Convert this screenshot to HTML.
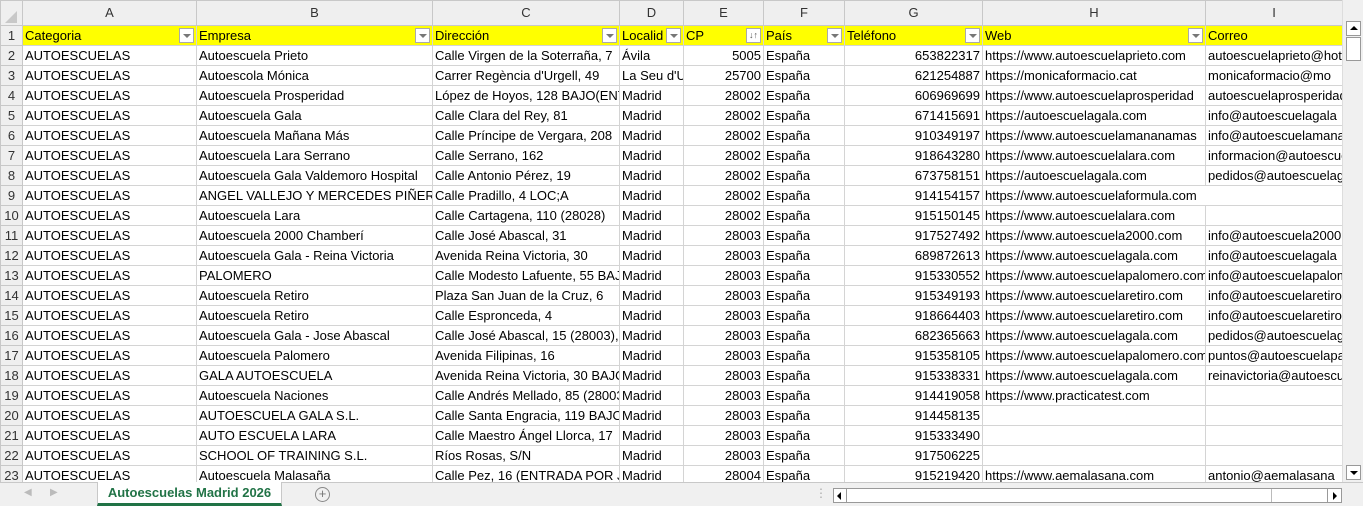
<!DOCTYPE html><html><head><meta charset="utf-8"><style>
*{margin:0;padding:0;box-sizing:border-box}
body{width:1363px;height:506px;overflow:hidden;background:#fff;font-family:"Liberation Sans",Arial,sans-serif;font-size:13px;color:#000;position:relative}
table{border-collapse:collapse;table-layout:fixed;position:absolute;left:0;top:0;width:1342px}
td{height:20px;border:1px solid #d4d4d4;white-space:nowrap;overflow:hidden;padding:0 2px;line-height:18px;position:relative}
tr.ch td{height:25px;background:#efefef;color:#333;text-align:center;border-color:#c8c8c8;font-size:13px}
td.rh{background:#efefef;color:#333;text-align:center;padding:0;border-color:#c8c8c8}
tr.h td{background:#ffff00}
tr.h td.rh{background:#efefef}
.r{text-align:right}
.f{position:absolute;right:2px;top:2px;width:15px;height:15px;background:#fff;border:1px solid #aaa}
.f:after{content:"";position:absolute;left:3px;top:5px;border-left:4px solid transparent;border-right:4px solid transparent;border-top:4px solid #777}
.s{position:absolute;right:2px;top:2px;width:15px;height:15px;background:#fff;border:1px solid #aaa;font-size:9px;line-height:13px;text-align:center;color:#555}
.tri{position:absolute;left:4px;top:10px;border-left:12px solid transparent;border-bottom:12px solid #c8c8c8}
#vs{position:absolute;left:1342px;top:0;width:21px;height:482px;background:#f0f0f0;border-left:1px solid #ddd}
#bot{position:absolute;left:0;top:482px;width:1363px;height:24px;background:#f0f0f0;border-top:1px solid #c8c8c8}
</style></head><body>
<table>
<colgroup><col style="width:22px"><col style="width:174px"><col style="width:236px"><col style="width:187px"><col style="width:64px"><col style="width:80px"><col style="width:81px"><col style="width:138px"><col style="width:223px"><col style="width:137px"></colgroup>
<tr class="ch"><td class="rh"><div class="tri"></div></td><td>A</td><td>B</td><td>C</td><td>D</td><td>E</td><td>F</td><td>G</td><td>H</td><td>I</td></tr>
<tr class="h"><td class="rh">1</td><td>Categoria<span class="f"></span></td><td>Empresa<span class="f"></span></td><td>Dirección<span class="f"></span></td><td>Localid<span class="f"></span></td><td>CP<span class="s">↓↑</span></td><td>País<span class="f"></span></td><td>Teléfono<span class="f"></span></td><td>Web<span class="f"></span></td><td>Correo</td></tr>
<tr><td class="rh">2</td><td>AUTOESCUELAS</td><td>Autoescuela Prieto</td><td>Calle Virgen de la Soterraña, 7</td><td>Ávila</td><td class="r">5005</td><td>España</td><td class="r">653822317</td><td>https://www.autoescuelaprieto.com</td><td>autoescuelaprieto@hotmail.com</td></tr>
<tr><td class="rh">3</td><td>AUTOESCUELAS</td><td>Autoescola Mónica</td><td>Carrer Regència d'Urgell, 49</td><td>La Seu d'Urgell</td><td class="r">25700</td><td>España</td><td class="r">621254887</td><td>https://monicaformacio.cat</td><td>monicaformacio@mo</td></tr>
<tr><td class="rh">4</td><td>AUTOESCUELAS</td><td>Autoescuela Prosperidad</td><td>López de Hoyos, 128 BAJO(ENT</td><td>Madrid</td><td class="r">28002</td><td>España</td><td class="r">606969699</td><td>https://www.autoescuelaprosperidad</td><td>autoescuelaprosperidad</td></tr>
<tr><td class="rh">5</td><td>AUTOESCUELAS</td><td>Autoescuela Gala</td><td>Calle Clara del Rey, 81</td><td>Madrid</td><td class="r">28002</td><td>España</td><td class="r">671415691</td><td>https://autoescuelagala.com</td><td>info@autoescuelagala</td></tr>
<tr><td class="rh">6</td><td>AUTOESCUELAS</td><td>Autoescuela Mañana Más</td><td>Calle Príncipe de Vergara, 208</td><td>Madrid</td><td class="r">28002</td><td>España</td><td class="r">910349197</td><td>https://www.autoescuelamananamas</td><td>info@autoescuelamana</td></tr>
<tr><td class="rh">7</td><td>AUTOESCUELAS</td><td>Autoescuela Lara Serrano</td><td>Calle Serrano, 162</td><td>Madrid</td><td class="r">28002</td><td>España</td><td class="r">918643280</td><td>https://www.autoescuelalara.com</td><td>informacion@autoescuela</td></tr>
<tr><td class="rh">8</td><td>AUTOESCUELAS</td><td>Autoescuela Gala Valdemoro Hospital</td><td>Calle Antonio Pérez, 19</td><td>Madrid</td><td class="r">28002</td><td>España</td><td class="r">673758151</td><td>https://autoescuelagala.com</td><td>pedidos@autoescuelagala</td></tr>
<tr><td class="rh">9</td><td>AUTOESCUELAS</td><td>ANGEL VALLEJO Y MERCEDES PIÑERO C</td><td>Calle Pradillo, 4 LOC;A</td><td>Madrid</td><td class="r">28002</td><td>España</td><td class="r">914154157</td><td colspan="2" style="border-right-color:#d4d4d4">https://www.autoescuelaformula.com</td></tr>
<tr><td class="rh">10</td><td>AUTOESCUELAS</td><td>Autoescuela Lara</td><td>Calle Cartagena, 110 (28028)</td><td>Madrid</td><td class="r">28002</td><td>España</td><td class="r">915150145</td><td>https://www.autoescuelalara.com</td><td></td></tr>
<tr><td class="rh">11</td><td>AUTOESCUELAS</td><td>Autoescuela 2000 Chamberí</td><td>Calle José Abascal, 31</td><td>Madrid</td><td class="r">28003</td><td>España</td><td class="r">917527492</td><td>https://www.autoescuela2000.com</td><td>info@autoescuela2000</td></tr>
<tr><td class="rh">12</td><td>AUTOESCUELAS</td><td>Autoescuela Gala - Reina Victoria</td><td>Avenida Reina Victoria, 30</td><td>Madrid</td><td class="r">28003</td><td>España</td><td class="r">689872613</td><td>https://www.autoescuelagala.com</td><td>info@autoescuelagala</td></tr>
<tr><td class="rh">13</td><td>AUTOESCUELAS</td><td>PALOMERO</td><td>Calle Modesto Lafuente, 55 BAJO</td><td>Madrid</td><td class="r">28003</td><td>España</td><td class="r">915330552</td><td>https://www.autoescuelapalomero.com</td><td>info@autoescuelapalomero</td></tr>
<tr><td class="rh">14</td><td>AUTOESCUELAS</td><td>Autoescuela Retiro</td><td>Plaza San Juan de la Cruz, 6</td><td>Madrid</td><td class="r">28003</td><td>España</td><td class="r">915349193</td><td>https://www.autoescuelaretiro.com</td><td>info@autoescuelaretiro</td></tr>
<tr><td class="rh">15</td><td>AUTOESCUELAS</td><td>Autoescuela Retiro</td><td>Calle Espronceda, 4</td><td>Madrid</td><td class="r">28003</td><td>España</td><td class="r">918664403</td><td>https://www.autoescuelaretiro.com</td><td>info@autoescuelaretiro</td></tr>
<tr><td class="rh">16</td><td>AUTOESCUELAS</td><td>Autoescuela Gala - Jose Abascal</td><td>Calle José Abascal, 15 (28003),</td><td>Madrid</td><td class="r">28003</td><td>España</td><td class="r">682365663</td><td>https://www.autoescuelagala.com</td><td>pedidos@autoescuelagala</td></tr>
<tr><td class="rh">17</td><td>AUTOESCUELAS</td><td>Autoescuela Palomero</td><td>Avenida Filipinas, 16</td><td>Madrid</td><td class="r">28003</td><td>España</td><td class="r">915358105</td><td>https://www.autoescuelapalomero.com</td><td>puntos@autoescuelapal</td></tr>
<tr><td class="rh">18</td><td>AUTOESCUELAS</td><td>GALA AUTOESCUELA</td><td>Avenida Reina Victoria, 30 BAJO</td><td>Madrid</td><td class="r">28003</td><td>España</td><td class="r">915338331</td><td>https://www.autoescuelagala.com</td><td>reinavictoria@autoescuela</td></tr>
<tr><td class="rh">19</td><td>AUTOESCUELAS</td><td>Autoescuela Naciones</td><td>Calle Andrés Mellado, 85 (28003)</td><td>Madrid</td><td class="r">28003</td><td>España</td><td class="r">914419058</td><td>https://www.practicatest.com</td><td></td></tr>
<tr><td class="rh">20</td><td>AUTOESCUELAS</td><td>AUTOESCUELA GALA S.L.</td><td>Calle Santa Engracia, 119 BAJO</td><td>Madrid</td><td class="r">28003</td><td>España</td><td class="r">914458135</td><td></td><td></td></tr>
<tr><td class="rh">21</td><td>AUTOESCUELAS</td><td>AUTO ESCUELA LARA</td><td>Calle Maestro Ángel Llorca, 17</td><td>Madrid</td><td class="r">28003</td><td>España</td><td class="r">915333490</td><td></td><td></td></tr>
<tr><td class="rh">22</td><td>AUTOESCUELAS</td><td>SCHOOL OF TRAINING S.L.</td><td>Ríos Rosas, S/N</td><td>Madrid</td><td class="r">28003</td><td>España</td><td class="r">917506225</td><td></td><td></td></tr>
<tr><td class="rh">23</td><td>AUTOESCUELAS</td><td>Autoescuela Malasaña</td><td>Calle Pez, 16 (ENTRADA POR JES</td><td>Madrid</td><td class="r">28004</td><td>España</td><td class="r">915219420</td><td>https://www.aemalasana.com</td><td>antonio@aemalasana</td></tr>
</table>
<div id="vs">
 <div style="position:absolute;left:3px;top:21px;width:15px;height:15px;background:#fff;border:1px solid #999"><div style="position:absolute;left:3px;top:4px;border-left:4px solid transparent;border-right:4px solid transparent;border-bottom:4px solid #000"></div></div>
 <div style="position:absolute;left:3px;top:37px;width:15px;height:24px;background:#fff;border:1px solid #999"></div>
 <div style="position:absolute;left:3px;top:465px;width:15px;height:15px;background:#fff;border:1px solid #999"><div style="position:absolute;left:3px;top:5px;border-left:4px solid transparent;border-right:4px solid transparent;border-top:4px solid #000"></div></div>
</div>
<div id="bot">
 <span style="position:absolute;left:24px;top:4px;color:#bbb;font-size:10px">◀</span>
 <span style="position:absolute;left:50px;top:4px;color:#bbb;font-size:10px">▶</span>
 <div style="position:absolute;left:97px;top:-1px;width:185px;height:24px;background:#fff;border-bottom:3px solid #217346;border-left:1px solid #c8c8c8;border-right:1px solid #c8c8c8;color:#217346;font-weight:bold;font-size:13px;text-align:center;line-height:21px">Autoescuelas Madrid 2026</div>
 <div style="position:absolute;left:315px;top:4px;width:15px;height:15px;border:1px solid #888;border-radius:50%;color:#777;font-size:13px;line-height:12px;text-align:center">+</div>
 <span style="position:absolute;left:815px;top:3px;color:#aaa;font-size:12px">⋮</span>
 <div style="position:absolute;left:833px;top:5px;width:509px;height:15px;background:#fff;border:1px solid #999"></div>
 <div style="position:absolute;left:833px;top:5px;width:14px;height:15px;border:1px solid #999;background:#fff"><div style="position:absolute;left:3px;top:3px;border-top:4px solid transparent;border-bottom:4px solid transparent;border-right:4px solid #000"></div></div>
 <div style="position:absolute;left:847px;top:6px;width:425px;height:13px;border-right:1px solid #bbb"></div>
 <div style="position:absolute;left:1327px;top:5px;width:15px;height:15px;border:1px solid #999;background:#fff"><div style="position:absolute;left:5px;top:3px;border-top:4px solid transparent;border-bottom:4px solid transparent;border-left:4px solid #000"></div></div>
</div>
</body></html>
